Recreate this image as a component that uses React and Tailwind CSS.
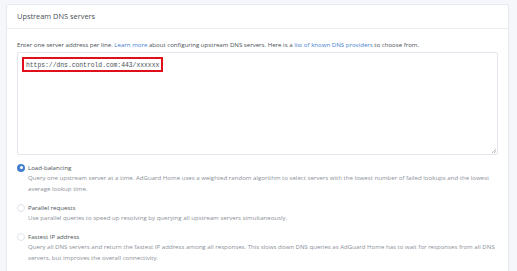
import React from 'react';

// Upstream DNS servers settings card

function Radio({ checked, label, children }) {
    return (
        <div className="flex flex-col">
            <div className="flex items-center h-[9px]">
                {checked ? (
                    <span className="w-[8px] h-[8px] rounded-full bg-[#467fcf] flex items-center justify-center">
                        <span className="w-[3px] h-[3px] rounded-full bg-white" />
                    </span>
                ) : (
                    <span className="w-[8px] h-[8px] rounded-full border border-[#dfe3ea] bg-white" />
                )}
                <span className="ml-[3px] text-[#495057]">{label}</span>
            </div>
            <div className="pl-[11px] text-[#8a9099] leading-[11px]">{children}</div>
        </div>
    );
}

export default function App() {
    return (
        <div
            className="w-[517px] h-[271px] overflow-hidden bg-[#f5f7fb] pt-[4px] pl-[6px] pr-[8px] text-[6.1px]"
            style={{ fontFamily: '"Open Sans", "Liberation Sans", sans-serif' }}
        >
            <div className="bg-white border border-[#e6e9ef] rounded-[2px] h-[300px]">
                {/* Header */}
                <div className="h-[24px] flex items-center px-[10px] border-b border-[#eceef3]">
                    <span className="text-[7.4px] text-[#495057]">Upstream DNS servers</span>
                </div>

                {/* Body */}
                <div className="px-[10px] pt-[10px]">
                    <p className="text-[#495057] leading-[11px]">
                        Enter one server address per line. <span className="text-[#467fcf]">Learn more</span> about configuring upstream DNS servers. Here is a{' '}
                        <span className="text-[#467fcf]">list of known DNS providers</span> to choose from.
                    </p>

                    <div className="mt-[2px] h-[103px] border border-[#e3e6ec] rounded-[2px] pl-[4px] pt-[4px] relative">
                        <div className="inline-block border-2 border-[#e0101a] px-[2px] h-[15px] leading-[11px]">
                            <span
                                className="text-[6.35px] text-[#495057]"
                                style={{ fontFamily: '"Liberation Mono", "DejaVu Sans Mono", monospace' }}
                            >
                                https://dns.controld.com:443/xxxxxx
                            </span>
                        </div>
                        <svg className="absolute right-[1px] bottom-[1px]" width="5" height="5" viewBox="0 0 5 5">
                            <path d="M1 5 L5 1 M3 5 L5 3" stroke="#9aa0a6" strokeWidth="0.7" />
                        </svg>
                    </div>

                    <div className="mt-[8px] flex flex-col gap-[9px]">
                        <Radio checked label="Load-balancing">
                            Query one upstream server at a time. AdGuard Home uses a weighted random algorithm to select servers with the lowest number of failed lookups and the lowest average lookup time.
                        </Radio>
                        <Radio label="Parallel requests">
                            Use parallel queries to speed up resolving by querying all upstream servers simultaneously.
                        </Radio>
                        <Radio label="Fastest IP address">
                            Query all DNS servers and return the fastest IP address among all responses. This slows down DNS queries as AdGuard Home has to wait for responses from all DNS servers, but improves the overall connectivity.
                        </Radio>
                    </div>
                </div>
            </div>
        </div>
    );
}
